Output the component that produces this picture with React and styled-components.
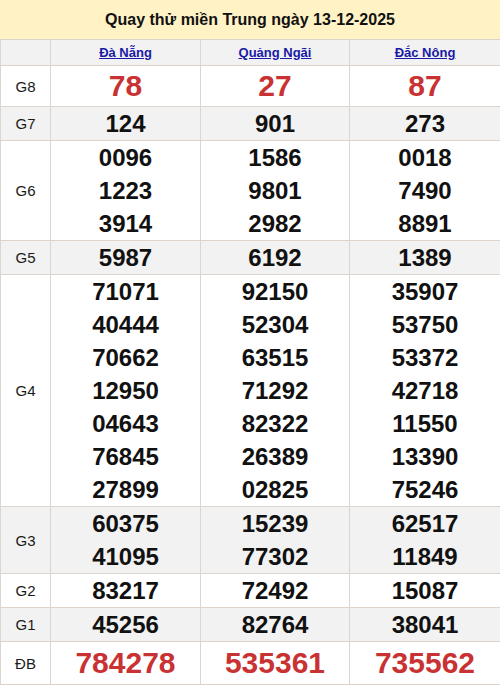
import styled, { createGlobalStyle } from 'styled-components'

const GlobalStyle = createGlobalStyle`
  body {
    margin: 0;
    background: #fff;
    font-family: "Liberation Sans", Arial, sans-serif;
  }
`

const Wrapper = styled.div`
  width: 500px;
`

const Title = styled.h1`
  margin: 0;
  height: 39px;
  line-height: 39px;
  background-color: #fff3c6;
  text-align: center;
  font-size: 16px;
  font-weight: 700;
  color: #111;
`

const Table = styled.table`
  width: 500px;
  border-collapse: collapse;
  table-layout: fixed;

  td, th {
    border: 1px solid #ddd5cd;
    padding: 0;
    text-align: center;
  }
`

const Row = styled.tr`
  background-color: ${({ $grey }) => ($grey ? '#f2f2f2' : '#fff')};
`

const HeadCell = styled.th`
  height: 25px;
  font-size: 13px;
  font-weight: 700;

  a {
    color: #1a1aa6;
    text-decoration: underline;
  }
`

const Label = styled.td`
  font-size: 15px;
  color: #1a1a1a;
`

const Numbers = styled.td`
  font-size: ${({ $big }) => ($big ? '30px' : '24px')};
  line-height: ${({ $lh }) => $lh}px;
  font-weight: 700;
  color: ${({ $big }) => ($big ? '#c93232' : '#111')};

  div {
    height: ${({ $lh }) => $lh}px;
  }
`

const provinces = ['Đà Nẵng', 'Quảng Ngãi', 'Đắc Nông']

const prizes = [
  { name: 'G8', big: true, lh: 40, cols: [['78'], ['27'], ['87']] },
  { name: 'G7', cols: [['124'], ['901'], ['273']] },
  { name: 'G6', cols: [['0096', '1223', '3914'], ['1586', '9801', '2982'], ['0018', '7490', '8891']] },
  { name: 'G5', cols: [['5987'], ['6192'], ['1389']] },
  {
    name: 'G4',
    cols: [
      ['71071', '40444', '70662', '12950', '04643', '76845', '27899'],
      ['92150', '52304', '63515', '71292', '82322', '26389', '02825'],
      ['35907', '53750', '53372', '42718', '11550', '13390', '75246'],
    ],
  },
  { name: 'G3', cols: [['60375', '41095'], ['15239', '77302'], ['62517', '11849']] },
  { name: 'G2', cols: [['83217'], ['72492'], ['15087']] },
  { name: 'G1', cols: [['45256'], ['82764'], ['38041']] },
  { name: 'ĐB', big: true, lh: 42, cols: [['784278'], ['535361'], ['735562']] },
]

export default function App() {
  return (
    <Wrapper>
      <GlobalStyle />
      <Title>Quay thử miền Trung ngày 13-12-2025</Title>
      <Table>
        <colgroup>
          <col style={{ width: 50 }} />
          <col style={{ width: 150 }} />
          <col style={{ width: 149 }} />
          <col style={{ width: 151 }} />
        </colgroup>
        <tbody>
          <Row $grey>
            <HeadCell />
            {provinces.map((p) => (
              <HeadCell key={p}>
                <a href="#">{p}</a>
              </HeadCell>
            ))}
          </Row>
          {prizes.map((prize, i) => (
            <Row key={prize.name} $grey={i % 2 === 1}>
              <Label>{prize.name}</Label>
              {prize.cols.map((nums, j) => (
                <Numbers key={j} $big={prize.big} $lh={prize.lh || 33}>
                  {nums.map((n) => (
                    <div key={n}>{n}</div>
                  ))}
                </Numbers>
              ))}
            </Row>
          ))}
        </tbody>
      </Table>
    </Wrapper>
  )
}
